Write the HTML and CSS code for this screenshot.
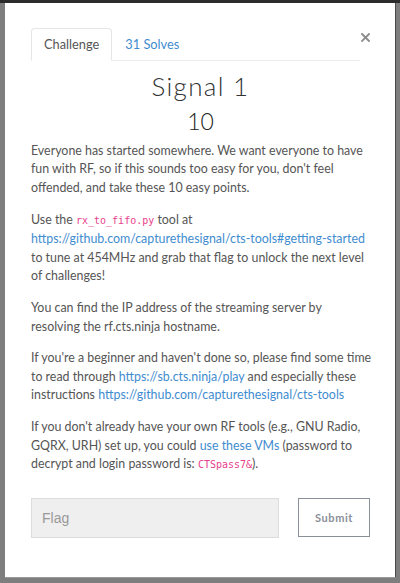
FILE: index.html
```html
<!DOCTYPE html>
<html>
<head>
<meta charset="utf-8">
<link rel="stylesheet" href="styles.css">
</head>
<body>
<div class="topbar"></div>
<div class="modal">
  <div class="modal-head">
    <ul class="tabs">
      <li class="tab active">Challenge</li>
      <li class="tab">31 Solves</li>
    </ul>
    <button class="close" aria-label="Close"><svg width="9" height="9" viewBox="0 0 9 9"><path d="M1 1L8 8M8 1L1 8" stroke="#8a8a8a" stroke-width="1.8" stroke-linecap="square"/></svg></button>
  </div>
  <h3 class="title">Signal 1</h3>
  <h4 class="value">10</h4>
  <div class="desc">
    <p>Everyone has started somewhere. We want everyone to have<br>fun with RF, so if this sounds too easy for you, don't feel<br>offended, and take these 10 easy points.</p>
    <p>Use the <code>rx_to_fifo.py</code> tool at<br><a href="#">https://github.com/capturethesignal/cts-tools#getting-started</a><br>to tune at 454MHz and grab that flag to unlock the next level<br>of challenges!</p>
    <p>You can find the IP address of the streaming server by<br>resolving the rf.cts.ninja hostname.</p>
    <p>If you're a beginner and haven't done so, please find some time<br>to read through <a href="#">https://sb.cts.ninja/play</a> and especially these<br>instructions <a href="#">https://github.com/capturethesignal/cts-tools</a></p>
    <p>If you don't already have your own RF tools (e.g., GNU Radio,<br>GQRX, URH) set up, you could <a href="#">use these VMs</a> (password to<br>decrypt and login password is: <code>CTSpass7&amp;</code>).</p>
  </div>
  <div class="submit-row">
    <input class="flag" type="text" placeholder="Flag">
    <button class="submit">Submit</button>
  </div>
</div>
</body>
</html>
```
FILE: styles.css
```css
html, body {
  margin: 0;
  padding: 0;
}
body {
  background: #7e7e7e;
  height: 583px;
  overflow: hidden;
  font-family: "Lato", "Liberation Sans", sans-serif;
}
.topbar {
  height: 3px;
  background: #2c2c2c;
}
.modal {
  margin: 0 5px;
  height: 574px;
  background: #fff;
  box-sizing: border-box;
  padding: 25px 25px 0 26px;
  box-shadow: 1px 0 0 #4a4a4a, 0 1px 0 #9a9a9a;
}
.modal-head {
  display: flex;
  align-items: flex-start;
}
.tabs {
  flex: 1;
  display: flex;
  list-style: none;
  margin: 0;
  padding: 0;
  border-bottom: 1px solid #ececec;
}
.tab {
  height: 31px;
  line-height: 31px;
  padding: 0 12px;
  font-size: 12.8px;
  color: #3f8ccf;
  border: 1px solid transparent;
  border-radius: 4px 4px 0 0;
  margin-bottom: -1px;
}
.tab.active {
  color: #555;
  border-color: #e6e6e6;
  border-bottom-color: #fff;
  background: #fff;
}
.close {
  border: 0;
  background: none;
  padding: 0;
  margin: 5px 0 0 1px;
  width: 9px;
  height: 9px;
  display: block;
  line-height: 0;
}
.title {
  margin: 10px 0 0;
  text-align: center;
  font-weight: 300;
  font-size: 26px;
  line-height: 1.2;
  color: #333;
  letter-spacing: 1.3px;
}
.value {
  margin: 6px 0 0;
  text-align: center;
  font-weight: 300;
  font-size: 23px;
  line-height: 1.2;
  color: #222;
}
.desc {
  margin-top: 6px;
  margin-right: -12px;
  font-size: 12.4px;
  line-height: 18.6px;
  color: #555;
  white-space: nowrap;
}
.desc p {
  margin: 0 0 13px;
}
.desc a {
  color: #3f8ccf;
  text-decoration: none;
}
.desc code {
  font-family: "DejaVu Sans Mono", "Liberation Mono", monospace;
  font-size: 10px;
  color: #e83e8c;
}
.submit-row {
  display: flex;
  margin-top: 23px;
  align-items: flex-start;
}
.flag {
  width: 248px;
  height: 40px;
  box-sizing: border-box;
  background: #efefef;
  border: 1px solid #dcdcdc;
  padding: 0 10px;
  font-family: "Liberation Sans", Arial, sans-serif;
  font-size: 14px;
  color: #555;
  outline: none;
}
.flag::placeholder {
  color: #999;
}
.submit {
  margin-left: 19px;
  width: 72px;
  height: 39px;
  background: #fff;
  border: 1px solid #8a9099;
  font-family: "Lato", "Liberation Sans", sans-serif;
  font-weight: 700;
  font-size: 11px;
  letter-spacing: 0.6px;
  color: #8a9099;
  padding: 0;
}
```
